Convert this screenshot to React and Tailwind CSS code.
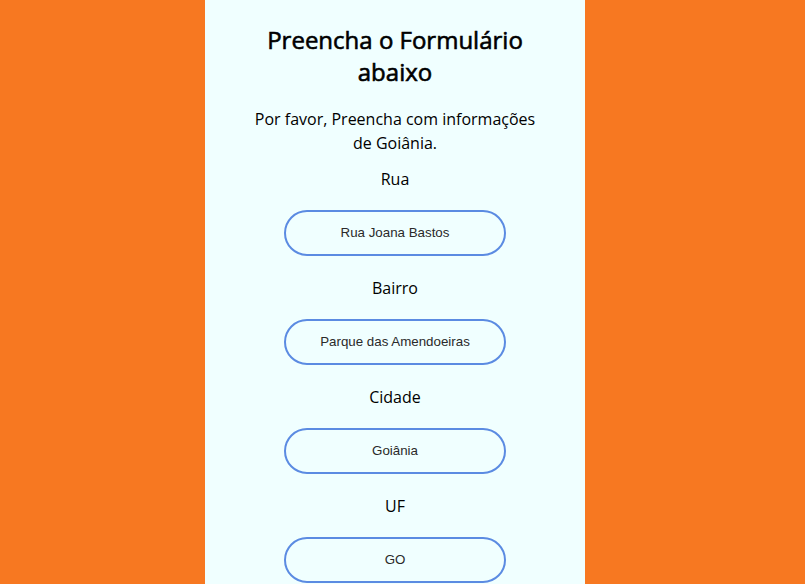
import React from "react";

const fields = [
  { label: "Rua", value: "Rua Joana Bastos" },
  { label: "Bairro", value: "Parque das Amendoeiras" },
  { label: "Cidade", value: "Goiânia" },
  { label: "UF", value: "GO" },
];

export default function App() {
  return (
    <div className="w-full min-h-screen bg-[#f77821] flex justify-center pr-[15px]" style={{ fontFamily: '"Open Sans", sans-serif' }}>
      <div className="w-[380px] bg-[#f0ffff] flex flex-col items-center pt-[24px] pb-[20px] text-black">
        <h1 className="w-[300px] text-center text-[24px] leading-[32px] font-normal [-webkit-text-stroke:0.6px_black]">Preencha o Formulário abaixo</h1>
        <p className="w-[300px] mt-[19px] text-center text-[16px] leading-[24px]">Por favor, Preencha com informações de Goiânia.</p>
        <div className="mt-[12px] flex flex-col items-center gap-[20px]">
          {fields.map((f) => (
            <div key={f.label} className="flex flex-col items-center gap-[19px]">
              <label className="text-[16px] leading-[24px]">{f.label}</label>
              <div className="w-[222px] h-[46px] rounded-full border-2 border-[#5b8be2] flex items-center justify-center text-[13.33px] text-[#2a2a2a]" style={{ fontFamily: '"Liberation Sans", Arial, sans-serif' }}>
                {f.value}
              </div>
            </div>
          ))}
        </div>
      </div>
    </div>
  );
}
